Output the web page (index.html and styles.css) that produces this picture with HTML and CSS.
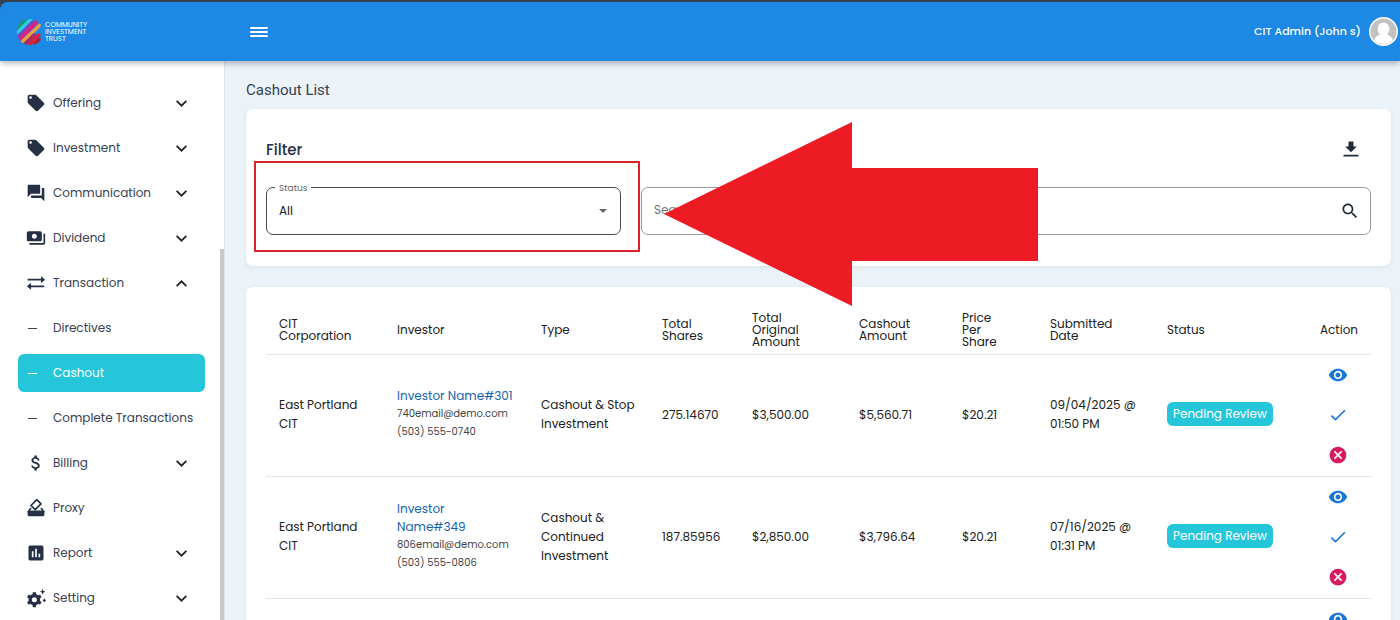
FILE: index.html
```html
<!DOCTYPE html>
<html lang="en">
<head>
<meta charset="utf-8">
<title>Cashout List</title>
<link rel="stylesheet" href="styles.css">
</head>
<body>
<svg class="sprite" aria-hidden="true">
  <symbol id="tag" viewBox="0 0 24 24"><path d="M21.41 11.58l-9-9C12.05 2.22 11.55 2 11 2H4c-1.1 0-2 .9-2 2v7c0 .55.22 1.05.59 1.42l9 9c.36.36.86.58 1.41.58s1.05-.22 1.41-.59l7-7c.37-.36.59-.86.59-1.41s-.23-1.06-.59-1.42zM5.5 7C4.67 7 4 6.33 4 5.500S4.670 4 5.500 4 7 4.670 7 5.500 6.330 7 5.500 7z"/></symbol>
  <symbol id="chat" viewBox="0 0 24 24"><path d="M21 6h-2v9H6v2c0 .55.45 1 1 1h11l4 4V7c0-.55-.45-1-1-1zm-4 6V3c0-.55-.45-1-1-1H3c-.55 0-1 .45-1 1v14l4-4h10c.55 0 1-.45 1-1z"/></symbol>
  <symbol id="cash" viewBox="0 0 24 24"><path d="M19 14V6c0-1.100-.9-2-2-2H3c-1.100 0-2 .9-2 2v8c0 1.100.9 2 2 2h14c1.100 0 2-.9 2-2zm-9-1c-1.660 0-3-1.340-3-3s1.340-3 3-3 3 1.340 3 3-1.340 3-3 3zm13-6v11c0 1.100-.9 2-2 2H4v-2h17V7h2z"/></symbol>
  <symbol id="swap" viewBox="0 0 24 24"><path d="M2 7h16V4l5 4-5 4V9H2zM22 15H6v-3l-5 4 5 4v-3h16z"/></symbol>
  <symbol id="dollar" viewBox="0 0 24 24"><path d="M11.8 10.9c-2.270-.59-3-1.200-3-2.150 0-1.090 1.010-1.850 2.700-1.850 1.780 0 2.440.85 2.500 2.100h2.210c-.07-1.720-1.120-3.300-3.210-3.810V3h-3v2.160c-1.940.42-3.500 1.680-3.500 3.610 0 2.310 1.910 3.460 4.700 4.130 2.500.6 3 1.480 3 2.410 0 .69-.49 1.790-2.700 1.790-2.060 0-2.870-.92-2.980-2.100h-2.200c.12 2.190 1.760 3.420 3.680 3.830V21h3v-2.150c1.950-.37 3.500-1.500 3.500-3.550 0-2.840-2.430-3.810-4.700-4.400z"/></symbol>
  <symbol id="stamp" viewBox="0 0 24 24"><path fill="none" stroke="currentColor" stroke-width="2" stroke-linejoin="round" d="M13 2l5 5-7 7-5-5z"/><path fill="none" stroke="currentColor" stroke-width="2" d="M6 12l-3 4h18l-3-4"/><path d="M2 16h20v4c0 1.100-.9 2-2 2H4c-1.100 0-2-.9-2-2z"/></symbol>
  <symbol id="chart" viewBox="0 0 24 24"><path d="M19 3H5c-1.100 0-2 .9-2 2v14c0 1.100.9 2 2 2h14c1.100 0 2-.9 2-2V5c0-1.100-.9-2-2-2zM9 17H7v-7h2v7zm4 0h-2V7h2v10zm4 0h-2v-4h2v4z"/></symbol>
  <symbol id="gear" viewBox="0 0 24 24"><circle cx="10" cy="14" r="5" fill="none" stroke="currentColor" stroke-width="4"/><g stroke="currentColor" stroke-width="4"><path d="M10 8V5M10 20v3M4.800 11L2.200 9.500M15.200 11l2.600-1.500M4.800 17l-2.600 1.500M15.200 17l2.600 1.500"/></g><path d="M20 1l1 2.500 2.500 1L21 5.500 20 8l-1-2.500-2.500-1 2.500-1zM22 12l1 2 1 1-1 1-1 1-1-1-1-1 1-1z"/></symbol>
  <symbol id="chevron" viewBox="0 0 12 12"><path d="M1.500 3.500L6 8l4.500-4.500" fill="none" stroke="currentColor" stroke-width="1.600"/></symbol>
  <symbol id="eye" viewBox="0 0 24 24"><path d="M12 4.500C7 4.500 2.730 7.610 1 12c1.730 4.390 6 7.500 11 7.500s9.270-3.110 11-7.500c-1.730-4.390-6-7.500-11-7.500zM12 17c-2.760 0-5-2.240-5-5s2.240-5 5-5 5 2.240 5 5-2.240 5-5 5zm0-8c-1.660 0-3 1.340-3 3s1.340 3 3 3 3-1.340 3-3-1.340-3-3-3z"/></symbol>
  <symbol id="check" viewBox="0 0 24 24"><path d="M9 16.170L4.830 12l-1.420 1.410L9 19 21 7l-1.410-1.410z"/></symbol>
  <symbol id="cancel" viewBox="0 0 24 24"><path d="M12 2C6.470 2 2 6.470 2 12s4.470 10 10 10 10-4.470 10-10S17.530 2 12 2zm5 13.590L15.590 17 12 13.410 8.410 17 7 15.590 10.590 12 7 8.410 8.410 7 12 10.590 15.590 7 17 8.410 13.410 12 17 15.590z"/></symbol>
  <symbol id="download" viewBox="0 0 24 24"><path d="M9 3h6v6h4l-7 7-7-7h4zM3 19h18v2H3z"/></symbol>
  <symbol id="search" viewBox="0 0 24 24"><path d="M15.500 14h-.79l-.28-.27C15.410 12.590 16 11.110 16 9.500 16 5.910 13.090 3 9.500 3S3 5.910 3 9.500 5.910 16 9.500 16c1.610 0 3.090-.59 4.230-1.570l.27.28v.79l5 4.990L20.490 19l-4.990-5zm-6 0C7.010 14 5 11.990 5 9.500S7.010 5 9.500 5 14 7.010 14 9.500 11.990 14 9.500 14z"/></symbol>
</svg>

<div class="app">
  <header class="topbar">
    <a class="brand" href="#" aria-label="Community Investment Trust">
      <svg class="brand-mark" viewBox="0 0 28 28" aria-hidden="true">
        <clipPath id="disc"><path d="M14 1c4 0 7 1.500 9 4l2 2-1 3 1 2-1 3 1 3-2 1 2 2c-2 4-6 6-11 6A13 13 0 0 1 14 1z"/></clipPath>
        <g clip-path="url(#disc)" stroke-width="3.400" stroke-linecap="round">
          <path stroke="#12a05c" d="M-1 12L13-2"/>
          <path stroke="#35c6ea" d="M0 16L18-2"/>
          <path stroke="#7648b8" d="M1 20L17 4"/>
          <path stroke="#e01f83" d="M4 21L22 3"/>
          <path stroke="#f0a13c" d="M6 24L24 7"/>
          <path stroke="#a82b62" d="M9 26l9-9"/>
          <path stroke="#e32032" d="M13 27l10-10"/>
          <path stroke="#b21d32" d="M19 26l7-7"/>
        </g>
      </svg>
      <span class="brand-text">COMMUNITY<br>INVESTMENT<br>TRUST</span>
    </a>
    <button class="menu-button" type="button" aria-label="Toggle menu"><span></span><span></span><span></span></button>
    <button class="account" type="button">
      <span>CIT Admin (John s)</span>
      <svg class="avatar" viewBox="0 0 30 30" aria-hidden="true"><circle cx="15" cy="15" r="15" fill="#fff"/><circle cx="15" cy="15" r="13.500" fill="#c3c2c2"/><path fill="#fff" d="M15 6c3.800 0 6 2.800 6 6.400 0 2.400-1 4.400-2.400 5.600 3.400 1 5.400 3 6 6.200a14 14 0 0 1-19.200 0c.6-3.200 2.600-5.200 6-6.200C10 16.800 9 14.800 9 12.400 9 8.800 11.200 6 15 6z"/></svg>
    </button>
  </header>

  <div class="body">
    <nav class="sidebar" aria-label="Main">
      <ul class="nav">
        <li><a class="nav-item" href="#"><svg><use href="#tag"/></svg><span>Offering</span><svg class="chevron"><use href="#chevron"/></svg></a></li>
        <li><a class="nav-item" href="#"><svg><use href="#tag"/></svg><span>Investment</span><svg class="chevron"><use href="#chevron"/></svg></a></li>
        <li><a class="nav-item" href="#"><svg><use href="#chat"/></svg><span>Communication</span><svg class="chevron"><use href="#chevron"/></svg></a></li>
        <li><a class="nav-item" href="#"><svg><use href="#cash"/></svg><span>Dividend</span><svg class="chevron"><use href="#chevron"/></svg></a></li>
        <li>
          <a class="nav-item" href="#"><svg><use href="#swap"/></svg><span>Transaction</span><svg class="chevron open"><use href="#chevron"/></svg></a>
          <ul class="subnav">
            <li><a class="nav-item" href="#"><i class="dash"></i><span>Directives</span></a></li>
            <li><a class="nav-item active" href="#" aria-current="page"><i class="dash"></i><span>Cashout</span></a></li>
            <li><a class="nav-item" href="#"><i class="dash"></i><span>Complete Transactions</span></a></li>
          </ul>
        </li>
        <li><a class="nav-item" href="#"><svg><use href="#dollar"/></svg><span>Billing</span><svg class="chevron"><use href="#chevron"/></svg></a></li>
        <li><a class="nav-item" href="#"><svg><use href="#stamp"/></svg><span>Proxy</span></a></li>
        <li><a class="nav-item" href="#"><svg><use href="#chart"/></svg><span>Report</span><svg class="chevron"><use href="#chevron"/></svg></a></li>
        <li><a class="nav-item" href="#"><svg><use href="#gear"/></svg><span>Setting</span><svg class="chevron"><use href="#chevron"/></svg></a></li>
      </ul>
      <div class="scroll-thumb"></div>
    </nav>

    <main class="content">
      <h1>Cashout List</h1>

      <section class="card filter">
        <div class="filter-head">
          <h2>Filter</h2>
          <button class="icon-button" type="button" aria-label="Download"><svg><use href="#download"/></svg></button>
        </div>
        <div class="fields">
          <div class="field status-field">
            <label for="status">Status</label>
            <select id="status"><option>All</option></select>
          </div>
          <div class="field search-field">
            <input id="search" type="text" placeholder="Search" aria-label="Search">
            <button class="icon-button" type="button" aria-label="Run search"><svg><use href="#search"/></svg></button>
          </div>
        </div>
        <div class="highlight"></div>
        <svg class="arrow" viewBox="0 0 374 184" aria-hidden="true"><path fill="#ed1c24" d="M0 92L188 0v46h186v93H188v45z"/></svg>
      </section>

      <section class="card list">
        <table>
          <colgroup><col class="c-corp"><col class="c-investor"><col class="c-type"><col class="c-shares"><col class="c-original"><col class="c-cashout"><col class="c-price"><col class="c-date"><col class="c-status"><col class="c-action"></colgroup>
          <thead>
            <tr><th>CIT Corporation</th><th>Investor</th><th>Type</th><th>Total Shares</th><th>Total<br>Original<br>Amount</th><th>Cashout Amount</th><th>Price<br>Per<br>Share</th><th>Submitted Date</th><th>Status</th><th class="action">Action</th></tr>
          </thead>
          <tbody>
            <tr>
              <td>East Portland CIT</td>
              <td><a href="#">Investor Name#301</a><small>740email@demo.com</small><small>(503) 555-0740</small></td>
              <td>Cashout &amp; Stop Investment</td><td>275.14670</td><td>$3,500.00</td><td>$5,560.71</td><td>$20.21</td>
              <td>09/04/2025 @ 01:50 PM</td>
              <td><span class="badge">Pending Review</span></td>
              <td class="action"><div class="actions"><button type="button" aria-label="View"><svg><use href="#eye"/></svg></button><button type="button" aria-label="Approve"><svg><use href="#check"/></svg></button><button class="reject" type="button" aria-label="Reject"><svg><use href="#cancel"/></svg></button></div></td>
            </tr>
            <tr>
              <td>East Portland CIT</td>
              <td><a href="#">Investor<br>Name#349</a><small>806email@demo.com</small><small>(503) 555-0806</small></td>
              <td>Cashout &amp; Continued Investment</td><td>187.85956</td><td>$2,850.00</td><td>$3,796.64</td><td>$20.21</td>
              <td>07/16/2025 @ 01:31 PM</td>
              <td><span class="badge">Pending Review</span></td>
              <td class="action"><div class="actions"><button type="button" aria-label="View"><svg><use href="#eye"/></svg></button><button type="button" aria-label="Approve"><svg><use href="#check"/></svg></button><button class="reject" type="button" aria-label="Reject"><svg><use href="#cancel"/></svg></button></div></td>
            </tr>
            <tr>
              <td colspan="9"></td>
              <td class="action"><div class="actions"><button type="button" aria-label="View"><svg><use href="#eye"/></svg></button></div></td>
            </tr>
          </tbody>
        </table>
      </section>
    </main>
  </div>
</div>
</body>
</html>
```

FILE: styles.css
```css
* { box-sizing: border-box; }

body {
  margin: 0;
  background: #37424f;
  color: #212121;
  font-family: Poppins, Inter, "Liberation Sans", sans-serif;
  font-size: 12px;
}

h1, h2, ul { margin: 0; padding: 0; }
ul { list-style: none; }
a { color: inherit; text-decoration: none; }
svg { display: block; fill: currentColor; }
button {
  padding: 0;
  border: 0;
  background: none;
  color: inherit;
  font: inherit;
}
.sprite { position: absolute; width: 0; height: 0; }

.app {
  display: flex;
  flex-direction: column;
  height: 100vh;
  padding-top: 2px;
  overflow: hidden;
}

/* Top bar */
.topbar {
  z-index: 2;
  display: flex;
  flex: none;
  align-items: center;
  height: 59px;
  padding: 0 2px 0 16px;
  border-top-left-radius: 8px;
  background: #1e88e5;
  box-shadow: 0 2px 6px rgba(40, 60, 80, 0.4);
  color: #fff;
}
.brand { display: flex; align-items: center; width: 234px; gap: 1px; }
.brand-mark { width: 28px; height: 28px; }
.brand-text { font-size: 7px; line-height: 7px; }
.menu-button { display: grid; gap: 2px; width: 18px; }
.menu-button span { height: 2px; border-radius: 1px; background: #fff; }
.account {
  display: flex;
  align-items: center;
  gap: 8px;
  margin-left: auto;
  font-size: 11px;
  font-weight: 500;
}
.avatar { width: 29px; height: 29px; }

.body { display: flex; flex: 1; min-height: 0; background: #ecf3f8; }

/* Sidebar */
.sidebar {
  position: relative;
  flex: none;
  width: 225px;
  padding: 23px 24px 0 18px;
  border-right: 1px solid #dde3e8;
  background: #fff;
  color: #364152;
}
.nav { display: grid; grid-template-columns: 182px; gap: 7px; }
.subnav { display: grid; gap: 7px; padding-top: 7px; }
.nav-item {
  display: flex;
  align-items: center;
  gap: 7px;
  height: 38px;
  padding: 0 12px 0 8px;
  border-radius: 6px;
  font-size: 12px;
  white-space: nowrap;
}
.nav-item svg { flex: none; width: 20px; height: 20px; color: #253044; }
.nav-item .chevron { width: 13px; height: 13px; margin-left: auto; color: #212121; }
.nav-item .open { transform: rotate(180deg); }
.dash { flex: none; width: 9px; height: 1px; margin: 0 9px 0 2px; background: currentColor; }
.active { background: #26c6da; color: #fff; }
.scroll-thumb {
  position: absolute;
  top: 188px;
  right: 0;
  bottom: 0;
  width: 4px;
  background: #c9c9c9;
}

/* Content */
.content { flex: 1; min-width: 0; padding: 19px 9px 0 21px; }
h1 {
  margin-bottom: 9px;
  color: #364152;
  font: 400 15px/20px Roboto, sans-serif;
}
.card {
  padding: 20px;
  border-radius: 7px;
  background: #fff;
  box-shadow: 0 1px 4px rgba(60, 90, 120, 0.12);
}

/* Filter card */
.filter { position: relative; height: 157px; margin-bottom: 21px; }
.filter-head {
  display: flex;
  align-items: center;
  justify-content: space-between;
  height: 40px;
  padding-right: 10px;
}
h2 { color: #253044; font-size: 15px; font-weight: 500; }
.icon-button svg { width: 20px; height: 20px; color: #212b38; }
.fields { display: grid; grid-template-columns: 355fr 730fr; gap: 20px; padding-top: 18px; }
.field {
  position: relative;
  display: flex;
  align-items: center;
  height: 48px;
  border: 1px solid #9a9a9a;
  border-radius: 7px;
}
.status-field { border-color: #4a4a4a; }
.status-field label {
  position: absolute;
  top: -6px;
  left: 8px;
  padding: 0 4px;
  background: #fff;
  color: #666;
  font-size: 9px;
  line-height: 12px;
}
.status-field::after {
  position: absolute;
  right: 13px;
  border: 4px solid transparent;
  border-top-color: #666;
  border-bottom: 0;
  content: "";
  pointer-events: none;
}
select, input {
  width: 100%;
  height: 100%;
  padding: 0 12px 2px;
  border: 0;
  outline: 0;
  appearance: none;
  background: none;
  color: #212121;
  font: inherit;
}
input::placeholder { color: #757575; opacity: 1; }
.search-field { padding-right: 10px; }

.highlight {
  position: absolute;
  top: 52px;
  left: 8px;
  width: 386px;
  height: 91px;
  border: 2px solid #d8232c;
}
.arrow { position: absolute; z-index: 1; top: 13px; left: 418px; width: 374px; height: 184px; }

/* Cashout table */
.list { padding-bottom: 0; }
table { width: 100%; border-collapse: collapse; table-layout: fixed; }
.c-corp { width: 118px; }
.c-investor { width: 144px; }
.c-type { width: 121px; }
.c-shares { width: 90px; }
.c-original { width: 107px; }
.c-cashout { width: 103px; }
.c-price { width: 88px; }
.c-date { width: 117px; }
.c-status { width: 153px; }
.c-action { width: 64px; }
th, td {
  padding: 0 13px;
  border-bottom: 1px solid #e4e6e8;
  text-align: left;
  vertical-align: middle;
}
th { height: 47px; font-weight: 400; line-height: 12px; }
td { height: 122px; padding-bottom: 2px; line-height: 19px; }
td a { display: block; color: #1565ae; line-height: 18px; white-space: nowrap; }
small { display: block; color: #444; font-size: 10px; line-height: 18px; }
.badge {
  display: inline-block;
  padding: 0 6px;
  border-radius: 6px;
  background: #26c6da;
  color: #fff;
  line-height: 24px;
  white-space: nowrap;
}
th.action { padding: 0; text-align: center; }
td.action { padding: 0 3px 0 0; }
.actions {
  display: grid;
  gap: 20px;
  height: 121px;
  padding-top: 10px;
  align-content: start;
  justify-content: center;
}
.actions button { color: #1976d2; }
.actions svg { width: 20px; height: 20px; }
.actions .reject { color: #d81b60; }
```
